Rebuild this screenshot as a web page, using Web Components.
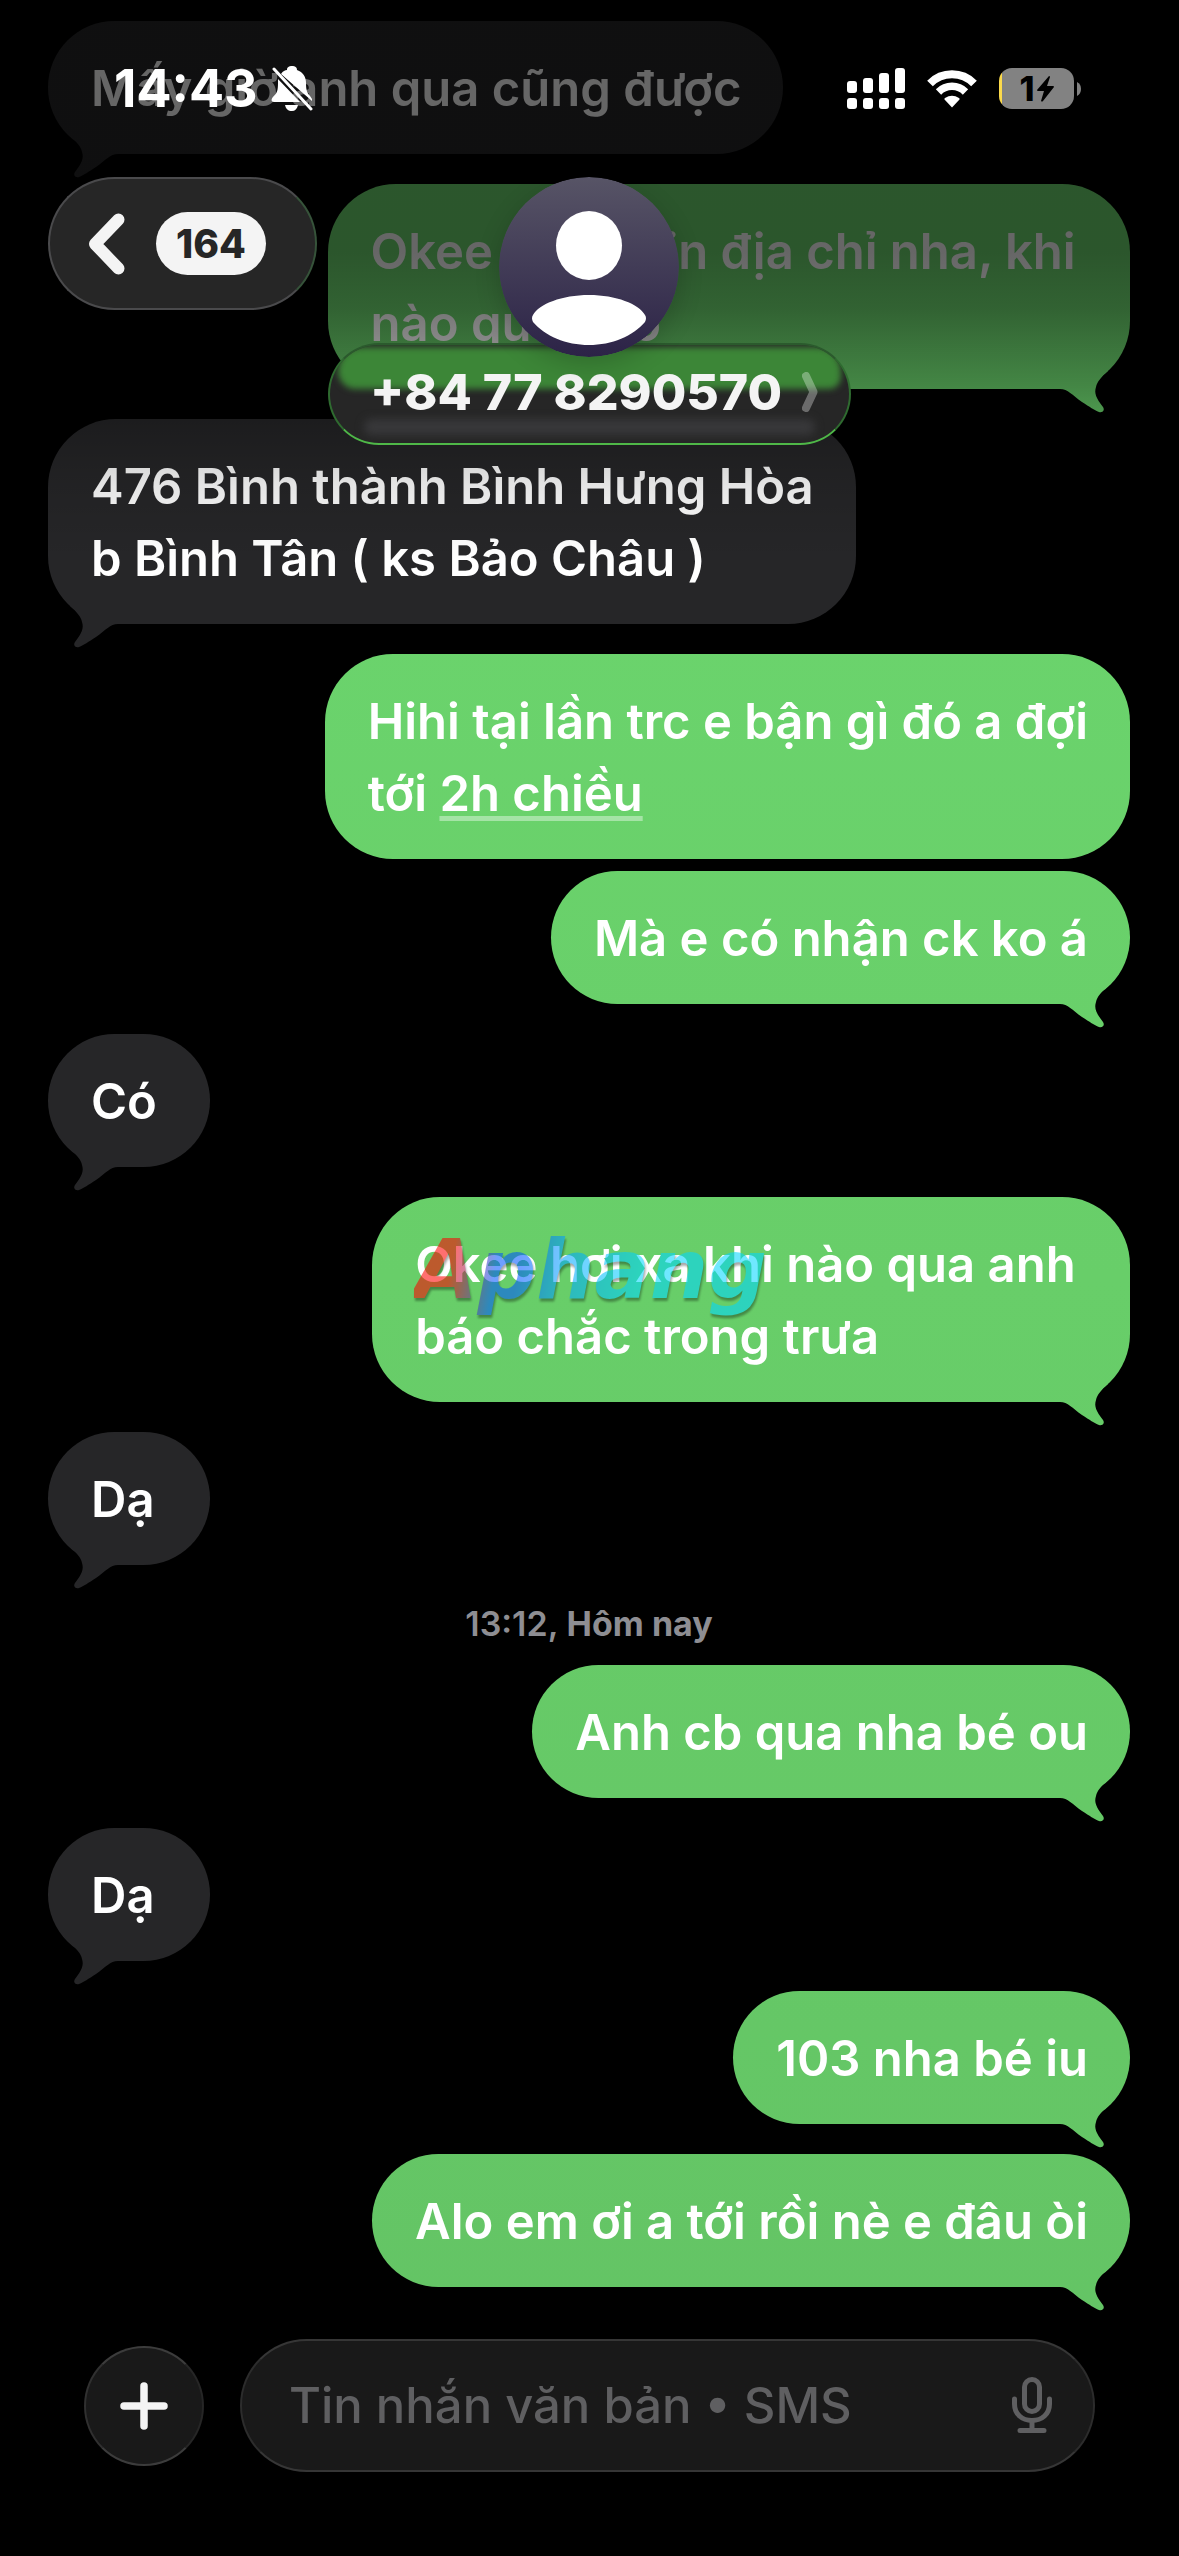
<!DOCTYPE html>
<html lang="vi">
<head>
<meta charset="utf-8">
<meta name="viewport" content="width=device-width, initial-scale=1">
<title>Tin nhắn</title>
<style>
  html { background: #000; }
  body { margin: 0; background: #000; color: #fff; font-family: Inter, "Noto Sans", sans-serif; font-size: 49px; line-height: 72px; font-weight: 600; }
</style>
</head>
<body>
<chat-screen></chat-screen>

<template id="t-screen">
  <style>
    :host { display: flex; flex-direction: column; min-height: 100vh; position: relative; overflow: hidden; }
    header { position: absolute; inset: 0 0 auto 0; z-index: 2; }
    .scrim { position: absolute; inset: 0 0 auto 0; height: 560px; z-index: 1; pointer-events: none;
      background: linear-gradient(rgba(0,0,0,.6) 0, rgba(0,0,0,.6) 45%, rgba(0,0,0,.54) 55%, rgba(0,0,0,.37) 69%, rgba(0,0,0,.23) 77%, rgba(0,0,0,.1) 87%, rgba(0,0,0,0) 100%); }
    main { display: flex; flex-direction: column; flex: 1; padding: 21px 49px 0 48px; }
    .marked { position: relative; display: flex; flex-direction: column; }
    brand-mark { position: absolute; left: 366px; top: 23px; }
  </style>
  <div class="scrim"></div>
  <header>
    <status-bar></status-bar>
    <chat-header count="164" phone="+84 77 8290570"></chat-header>
  </header>
  <main>
    <chat-bubble side="in" tail>Mấy giờ anh qua cũng được</chat-bubble>
    <chat-bubble side="out" tail>Okee &nbsp;nhắn tin địa chỉ nha, khi&nbsp;<br>nào qua báo</chat-bubble>
    <chat-bubble side="in" tail>476 Bình thành Bình Hưng Hòa<br>b Bình Tân ( ks Bảo Châu )</chat-bubble>
    <chat-bubble side="out">Hihi tại lần trc e bận gì đó a đợi<br>tới <time-link>2h chiều</time-link></chat-bubble>
    <chat-bubble side="out" tail>Mà e có nhận ck ko á</chat-bubble>
    <chat-bubble side="in" tail>Có</chat-bubble>
    <div class="marked">
      <chat-bubble side="out" tail>Okee hơi xa khi nào qua anh&nbsp;<br>báo chắc trong trưa</chat-bubble>
      <brand-mark>Aphang</brand-mark>
    </div>
    <chat-bubble side="in" tail>Dạ</chat-bubble>
    <time-stamp><span slot="time">13:12,</span> Hôm nay</time-stamp>
    <chat-bubble side="out" tail>Anh cb qua nha bé ou</chat-bubble>
    <chat-bubble side="in" tail>Dạ</chat-bubble>
    <chat-bubble side="out" tail>103 nha bé iu</chat-bubble>
    <chat-bubble side="out" tail>Alo em ơi a tới rồi nè e đâu òi</chat-bubble>
  </main>
  <message-composer></message-composer>
</template>

<template id="t-bubble">
  <style>
    :host { --fill: linear-gradient(#262628, #262628); display: flex; margin-bottom: 12px; }
    :host([tail]) { margin-bottom: 30px; }
    :host([side="out"]) { --fill: linear-gradient(#6dd86f 0%, #68ce69 50%, #63c264 100%) fixed; justify-content: flex-end; }
    .body { position: relative; box-sizing: border-box; min-width: 162px; padding: 32px 42px 29px 43px; border-radius: 68px; background: var(--fill); white-space: nowrap; }
    .tail { display: none; position: absolute; right: 0; bottom: -24px; width: 70px; height: 64px; background: var(--fill);
      clip-path: path("M0 20V40C8 40 12 46 22 53C30 58 34 61 39 63C43 64 45 61 43 58C36 49 34 44 36 38C37 33 41 28 48 22L30 4Z"); }
    :host([tail]) .tail { display: block; }
    :host([side="in"]) .tail { right: auto; left: 0; transform: scaleX(-1); }
    .text { position: relative; }
  </style>
  <div class="body"><div class="tail"></div><div class="text"><slot></slot></div></div>
</template>

<template id="t-link">
  <style>
    :host { display: inline; }
    a { color: inherit; text-decoration: underline rgba(255,255,255,.4) 5px; text-underline-offset: 5px; text-decoration-skip-ink: none; }
  </style>
  <a href="#"><slot></slot></a>
</template>

<template id="t-stamp">
  <style>
    :host { display: block; padding: 9px 0 21px; text-align: center; color: #8e8e93; font-size: 34px; line-height: 40px; font-weight: 700; }
    ::slotted(span) { font-weight: 600; }
  </style>
  <slot name="time"></slot> <slot></slot>
</template>

<template id="t-brand">
  <style>
    :host { display: block; opacity: .56; pointer-events: none; }
    .word { display: block; filter: drop-shadow(1px 3px 1px rgba(0,0,0,.6)); }
    .word span { display: block; padding: 0 6px 0 0; font: italic 700 82px/100px "DejaVu Sans", sans-serif; color: transparent;
      background: linear-gradient(100deg, #f00 0, #f00 12%, #05f 24%, #05f 30%, #00a4ff 42%, #00d7ff 62%); -webkit-background-clip: text; background-clip: text; }
  </style>
  <div class="word"><span><slot></slot></span></div>
</template>

<template id="t-status">
  <style>
    :host { display: flex; align-items: center; justify-content: space-between; height: 177px; box-sizing: border-box; padding: 0 98px 0 114px; }
    .left, .right { display: flex; align-items: center; }
    .left { gap: 13px; }
    .right { gap: 22px; }
    .time { font-size: 52px; font-weight: 700; }
    svg { display: block; }
    .battery { display: flex; align-items: center; gap: 3px; }
    .cell { display: flex; align-items: center; justify-content: center; gap: 2px; width: 75px; height: 41px; border-radius: 13px; font-size: 34px; line-height: 41px; font-weight: 800; color: #000;
      background: linear-gradient(90deg, #fbd94b 3px, #828282 3px); }
  </style>
  <div class="left">
    <span class="time">14:43</span>
    <svg width="42" height="46" viewBox="0 0 42 46" fill="#fff">
      <path d="M10 8C12 5 14 4 16 4C16 1 18 0 21 0C24 0 26 1 26 4C32 6 35 11 35 17C35 24 36 27 39 30L41 33V35Z"/>
      <path d="M7 13L29 36H3C0 36 0 33 2 31C6 27 7 25 7 17Z"/>
      <path d="M14 39H27C26 43 24 45 21 45C17 45 15 43 14 39Z"/>
      <path d="M3 3L40 43" stroke="#fff" stroke-width="3" stroke-linecap="round"/>
    </svg>
  </div>
  <div class="right">
    <svg width="58" height="41" viewBox="0 0 58 41" fill="#fff">
      <rect x="0" y="13" width="10" height="12" rx="3"/><rect x="16" y="10" width="10" height="15" rx="3"/><rect x="32" y="5" width="10" height="20" rx="3"/><rect x="48" y="0" width="10" height="25" rx="3"/>
      <rect x="0" y="30" width="10" height="11" rx="3"/><rect x="16" y="30" width="10" height="11" rx="3"/><rect x="32" y="30" width="10" height="11" rx="3"/><rect x="48" y="30" width="10" height="11" rx="3"/>
    </svg>
    <svg width="50" height="38" viewBox="0 0 50 38" fill="none" stroke="#fff">
      <path d="M3 13.500A31 31 0 0 1 47 13.500" stroke-width="8"/>
      <path d="M11.500 22A19 19 0 0 1 38.500 22" stroke-width="7.500"/>
      <path d="M25 37.500L17.500 29.500Q17 28.500 18 28Q25 23.500 32 28Q33 28.500 32.500 29.500Z" fill="#fff" stroke="none"/>
    </svg>
    <div class="battery">
      <div class="cell"><span>1</span>
        <svg width="17" height="26" viewBox="0 0 17 26"><path d="M12 0L0 14Q0 15 1 15H7L4 25Q5 26 6 25L17 11Q17 10 16 10H10L13 1Q13 0 12 0Z" fill="#000"/></svg>
      </div>
      <svg width="4" height="14" viewBox="0 0 4 14"><path d="M0 0Q4 2 4 7Q4 12 0 14Z" fill="#828282"/></svg>
    </div>
  </div>
</template>

<template id="t-header">
  <style>
    :host { display: grid; grid-template-columns: 1fr auto 1fr; align-items: start; padding: 0 48px; }
    button { font: inherit; color: inherit; margin: 0; cursor: pointer; }
    svg { display: block; }
    .back { display: flex; align-items: center; gap: 31px; justify-self: start; height: 133px; padding: 0 49px 0 37px; border-radius: 68px; background: #262626; border: 2px solid #4a4a4c; border-right-color: #36533a; box-sizing: border-box; }
    .count { display: block; padding: 0 20px; border-radius: 32px; background: #f4f4f4; color: #262626; font-size: 39px; line-height: 63px; font-weight: 800; }
    .who { display: flex; flex-direction: column; align-items: center; }
    .avatar { position: relative; z-index: 1; border-radius: 50%; box-shadow: 0 8px 24px rgba(0,0,0,.18); }
    .name { position: relative; isolation: isolate; overflow: hidden; display: flex; align-items: center; gap: 20px; height: 102px; margin-top: -14px; padding: 0 31px 4px 40px; box-sizing: border-box; border-radius: 51px;
      background: #262626; border: 2px solid; border-color: #2b5a2d #2f6b30 #4fb848 #2f6b30; font-size: 50px; font-weight: 800; color: #f4f4f4; }
    .name::before, .name::after { content: ""; position: absolute; z-index: -1; }
    .name::before { inset: 2px 8px 54px; border-radius: 44px 44px 22px 32px; background: #3c8637; filter: blur(3px); }
    .name::after { inset: 74px 34px 8px; border-radius: 9px; background: #38383a; filter: blur(4px); }
  </style>
  <button class="back" aria-label="Quay lại">
    <svg width="38" height="62" viewBox="0 0 38 62"><path d="M31.500 6.500L8 31L31.500 55.500" fill="none" stroke="#f4f4f4" stroke-width="12" stroke-linecap="round" stroke-linejoin="round"/></svg>
    <span class="count"></span>
  </button>
  <div class="who">
    <svg class="avatar" width="180" height="180" viewBox="0 0 180 180">
      <defs><linearGradient id="g" x1="0" y1="0" x2="0" y2="1"><stop offset="0" stop-color="#575466"/><stop offset="1" stop-color="#2c2347"/></linearGradient></defs>
      <circle cx="90" cy="90" r="90" fill="url(#g)"/>
      <ellipse cx="90" cy="68.500" rx="33" ry="34.500" fill="#fff"/>
      <path d="M90 118C117 118 140 127 146 138Q148 141 146 145C134 159 113 168 90 168C67 168 46 159 34 145Q32 141 34 138C40 127 63 118 90 118Z" fill="#fff"/>
    </svg>
    <button class="name"><span class="phone"></span>
      <svg width="16" height="40" viewBox="0 0 16 40"><path d="M4 4L11.500 20L4 36" fill="none" stroke="#fff" stroke-opacity=".32" stroke-width="8" stroke-linecap="round" stroke-linejoin="round"/></svg>
    </button>
  </div>
</template>

<template id="t-composer">
  <style>
    :host { display: flex; align-items: center; gap: 36px; padding: 22px 84px 84px 84px; }
    button { display: grid; place-items: center; margin: 0; padding: 0; border: 0; background: none; cursor: pointer; }
    svg { display: block; }
    .plus { width: 120px; height: 120px; border-radius: 50%; background: #191919; border: 2px solid; border-color: #3c3c3c #262626 #3c3c3c #303030; box-sizing: border-box; flex: none; }
    .field { flex: 1; min-width: 0; display: flex; align-items: center; height: 133px; box-sizing: border-box; padding: 0 41px 0 47px; border-radius: 68px; background: #191919; border: 2px solid; border-color: #363636 #2c2c2c #363636 #2c2c2c; }
    input { flex: 1; min-width: 0; margin: 0; padding: 0; border: 0; outline: 0; background: none; color: #fff; font: inherit; font-weight: 500; height: 72px; }
    input::placeholder { color: #5f5f61; opacity: 1; }
  </style>
  <button class="plus" aria-label="Thêm">
    <svg width="48" height="48" viewBox="0 0 48 48"><path d="M24 4V44M4 24H44" stroke="#f4f4f4" stroke-width="7.500" stroke-linecap="round"/></svg>
  </button>
  <div class="field">
    <input type="text" placeholder="Tin nhắn văn bản • SMS" aria-label="Tin nhắn văn bản • SMS">
    <button aria-label="Đọc chính tả">
      <svg width="40" height="57" viewBox="0 0 40 57" fill="none" stroke="#5f5f61" stroke-width="5" stroke-linecap="round">
        <rect x="12.500" y="2.500" width="15" height="32" rx="7.500"/>
        <path d="M2.500 22V27C2.500 37 10 43.500 20 43.500C30 43.500 37.500 37 37.500 27V22M20 44V53M8 53.500H32"/>
      </svg>
    </button>
  </div>
</template>

<script>
  class Base extends HTMLElement {
    constructor() {
      super();
      this.attachShadow({ mode: "open" });
      this.shadowRoot.append(document.getElementById(this.constructor.template).content.cloneNode(true));
    }
  }
  const define = (name, template) => customElements.define(name, class extends Base { static template = template; });

  define("time-link", "t-link");
  define("time-stamp", "t-stamp");
  define("brand-mark", "t-brand");
  define("chat-bubble", "t-bubble");
  define("status-bar", "t-status");
  define("message-composer", "t-composer");

  class ChatHeader extends Base {
    static template = "t-header";
    connectedCallback() {
      this.shadowRoot.querySelector(".count").textContent = this.getAttribute("count");
      this.shadowRoot.querySelector(".phone").textContent = this.getAttribute("phone");
    }
  }
  customElements.define("chat-header", ChatHeader);
  define("chat-screen", "t-screen");
</script>
</body>
</html>
